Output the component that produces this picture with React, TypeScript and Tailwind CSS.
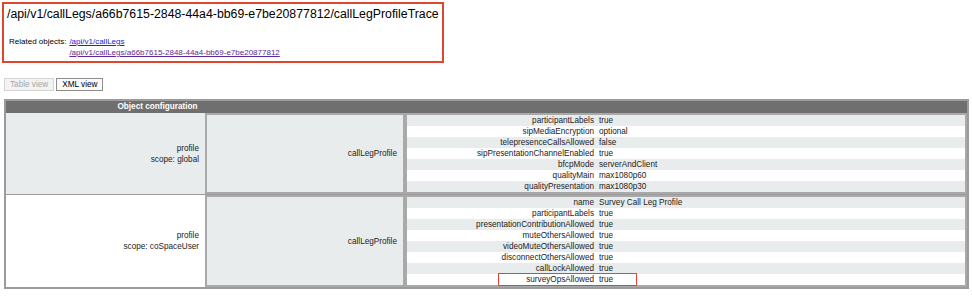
const global: [string, string][] = [
  ['participantLabels', 'true'],
  ['sipMediaEncryption', 'optional'],
  ['telepresenceCallsAllowed', 'false'],
  ['sipPresentationChannelEnabled', 'true'],
  ['bfcpMode', 'serverAndClient'],
  ['qualityMain', 'max1080p60'],
  ['qualityPresentation', 'max1080p30'],
]

const coSpace: [string, string][] = [
  ['name', 'Survey Call Leg Profile'],
  ['participantLabels', 'true'],
  ['presentationContributionAllowed', 'true'],
  ['muteOthersAllowed', 'true'],
  ['videoMuteOthersAllowed', 'true'],
  ['disconnectOthersAllowed', 'true'],
  ['callLockAllowed', 'true'],
  ['surveyOpsAllowed', 'true'],
]

function Props({ rows, mark }: { rows: [string, string][]; mark?: string }) {
  return (
    <div className="flex flex-col justify-center border-2 border-[#a9a9a9] bg-white">
      {rows.map(([k, v], i) => (
        <div
          key={k}
          className={`grid h-[11px] grid-cols-[192px_1fr] items-center ${i % 2 === 0 ? 'bg-[#e9eced]' : 'bg-white'}`}
        >
          <div className="relative pr-[5px] text-right">
            {k === mark && (
              <span className="absolute top-[-1px] right-[-38px] h-[13px] w-[139px] border border-[#e0462e]" />
            )}
            {k}
          </div>
          <div>{v}</div>
        </div>
      ))}
    </div>
  )
}

function Row({
  label,
  scope,
  rows,
  white,
  mark,
}: {
  label: string
  scope: string
  rows: [string, string][]
  white?: boolean
  mark?: string
}) {
  return (
    <div className={`grid grid-cols-[199px_200px_1fr] ${white ? 'bg-white' : 'bg-[#e9eced]'}`}>
      <div className="flex flex-col items-end justify-center pr-[6px] text-right">
        <span>{label}</span>
        <span>{scope}</span>
      </div>
      <div className="flex items-center justify-end border-2 border-[#a9a9a9] bg-[#e9eced] pr-[6px]">
        callLegProfile
      </div>
      <Props rows={rows} mark={mark} />
    </div>
  )
}

export default function App() {
  return (
    <div className="min-h-[307px] w-[972px] bg-white font-['Liberation_Sans',Arial,sans-serif] text-black">
      <div className="pt-[2px] pl-[2px]">
        <div className="h-[61px] w-[442px] border-2 border-[#e0462e] pl-[3px]">
          <h1 className="mt-[2px] text-[12.3px] leading-[16px] whitespace-nowrap">
            /api/v1/callLegs/a66b7615-2848-44a4-bb69-e7be20877812/callLegProfileTrace
          </h1>
          <div className="mt-[14px] flex text-[8px] leading-[11px]">
            <span className="pl-[2px]">Related objects:</span>
            <div className="ml-[3px] flex flex-col">
              <a href="#" className="text-[#2323d8] underline">/api/v1/callLegs</a>
              <a href="#" className="text-[#5b2a98] underline">/api/v1/callLegs/a66b7615-2848-44a4-bb69-e7be20877812</a>
            </div>
          </div>
        </div>
      </div>

      <div className="mt-[15px] flex gap-[2px] pl-[4px] text-[8.2px] leading-[11px]">
        <span className="h-[13px] border border-[#d5d5d5] bg-[#f3f3f3] px-[5px] text-[#a6a6a6]">Table view</span>
        <span className="h-[13px] border border-[#8e8e8e] bg-[#fafafa] px-[5px]">XML view</span>
      </div>

      <div className="mx-[4px] mt-[8px] w-[965px] border-2 border-[#9b9b9b] text-[8.2px] leading-[11px] text-[#222]">
        <div className="grid h-[12px] grid-cols-[303px_1fr] bg-[#6f6f6f] font-bold text-white">
          <div className="text-center">Object configuration</div>
          <div />
        </div>
        <Row label="profile" scope="scope: global" rows={global} />
        <div className="h-[1px] bg-[#9b9b9b]" />
        <Row label="profile" scope="scope: coSpaceUser" rows={coSpace} white mark="surveyOpsAllowed" />
      </div>
    </div>
  )
}
